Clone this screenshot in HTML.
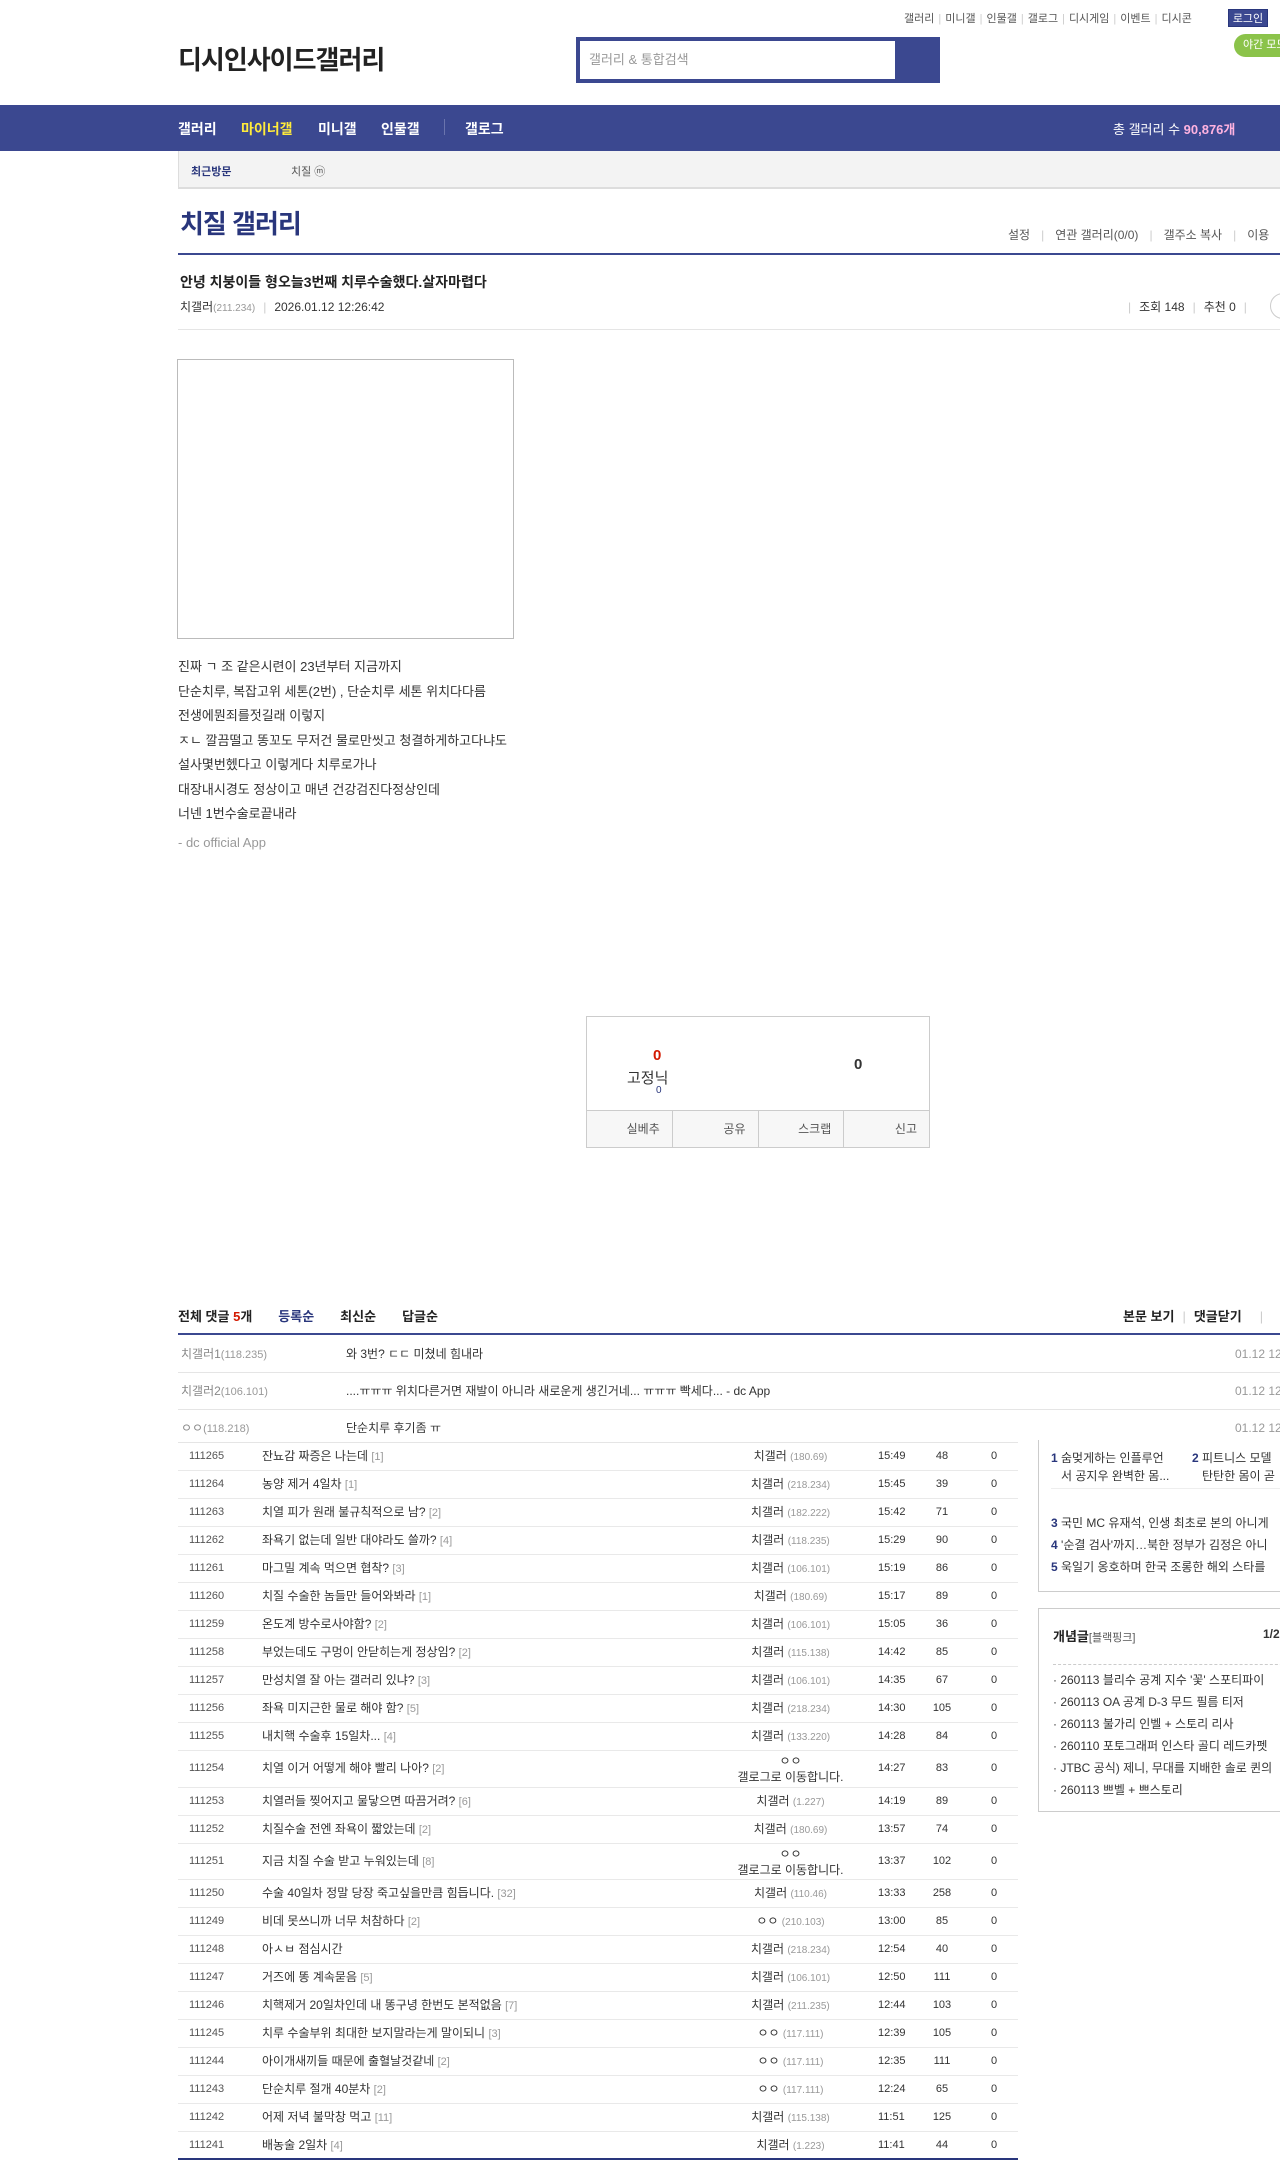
<!DOCTYPE html>
<html><head><meta charset="utf-8">
<style>
*{margin:0;padding:0;box-sizing:border-box}
html,body{width:1280px;height:2160px;overflow:hidden;background:#fff}
body{font-family:"Liberation Sans","Noto Sans CJK KR",sans-serif;color:#333;font-size:12px;position:relative}
.a{position:absolute;white-space:nowrap}
.toplinks{top:10px;left:904px;font-size:11px;color:#555}
.toplinks span.s{color:#ccc;margin:0 4px}
.login{top:9px;left:1228px;width:40px;height:18px;background:#3b4890;color:#fff;font-size:11px;text-align:center;line-height:18px;border:1px solid #29367c}
.night{top:34px;left:1234px;width:60px;height:23px;background:#8bc34a;border-radius:12px;color:#fff;font-size:11px;line-height:23px;padding-left:9px}
.logo{top:40px;left:178px;font-size:26px;font-weight:bold;color:#222;letter-spacing:-1px}
.search{top:37px;left:576px;width:364px;height:46px;background:#3b4890}
.search div{position:absolute;left:4px;top:4px;width:315px;height:38px;background:#fff;font-size:13px;color:#999;line-height:38px;padding-left:9px}
.nav{top:105px;left:0;width:1280px;height:46px;background:#3b4890}
.nav span{position:absolute;top:14px;color:#fff;font-size:14px;font-weight:bold}
.recent{top:151px;left:178px;width:1102px;height:38px;background:#f3f3f3;border-bottom:2px solid #ddd;border-left:1px solid #ddd}
.title{top:204px;left:180px;font-size:26px;font-weight:bold;color:#29367c;letter-spacing:-1px}
.rlinks{top:226px;left:1008px;font-size:12px;color:#555}
.rlinks i{font-style:normal;color:#ccc;margin:0 11px}
.bline{left:178px;width:1102px;background:#3b4890}
.gline{left:178px;width:1102px;height:1px;background:#e5e5e5}
.body p{font-size:13px;color:#333;height:24.5px;line-height:24.5px}
.rec{top:1016px;left:586px;width:344px;height:132px;border:1px solid #ccc}
.rec .btns{position:absolute;left:0;top:93px;width:342px;height:37px;border-top:1px solid #ccc;background:#f7f7f7;display:flex}
.rec .btns div{flex:1;border-right:1px solid #ccc;text-align:right;padding-right:12px;line-height:37px;font-size:12px;color:#555}
.rec .btns div:last-child{border-right:none}
.ch{top:1306px;left:178px;font-size:13px;font-weight:bold;color:#222}
.cm{left:178px;width:1102px;height:37px;border-bottom:1px solid #e5e5e5;font-size:12px}
.cm span{position:absolute;top:0;line-height:36px}
.cm .n{left:3px;color:#888}
.cm .n small{font-size:11px;color:#999}
.cm .t{left:168px;color:#333}
.cm .d{left:1057px;color:#999}
.list{top:1443px;left:178px;width:840px}
.row{position:relative;height:28px;border-bottom:1px solid #e9e9e9;font-size:12px;color:#333}
.row.tall{height:36px}
.row>span{position:absolute;top:0;line-height:27px}
.row.tall>span{line-height:35px}
.row .num{left:11px;font-size:11px;color:#555}
.row .tt{left:84px}
.row .tt b{font-weight:normal;color:#999;font-size:11px}
.row .w{left:540px;width:145px;text-align:center}
.row .w small{color:#999;font-size:10px}
.row .tm{left:700px;font-size:11px}
.row .v{left:748px;width:32px;text-align:center;font-size:11px}
.row .r{left:806px;width:20px;text-align:center;font-size:11px}
.row .w2{position:absolute;left:540px;width:145px;text-align:center;top:2px;line-height:16px;font-size:12px}
.box{border:1px solid #ccc;border-right:none;left:1038px;width:260px}
</style></head><body>

<div class="a toplinks">갤러리<span class="s">|</span>미니갤<span class="s">|</span>인물갤<span class="s">|</span>갤로그<span class="s">|</span>디시게임<span class="s">|</span>이벤트<span class="s">|</span>디시콘</div>
<div class="a login">로그인</div>
<div class="a night">야간 모드</div>
<div class="a logo">디시인사이드갤러리</div>
<div class="a search"><div>갤러리 &amp; 통합검색</div></div>

<div class="a nav">
<span style="left:178px">갤러리</span>
<span style="left:241px;color:#ffeb3b">마이너갤</span>
<span style="left:318px">미니갤</span>
<span style="left:381px">인물갤</span>
<span style="left:444px;top:14px;width:1px;height:16px;background:#6a74ad"></span>
<span style="left:465px">갤로그</span>
<span style="left:1113px;font-weight:normal;font-size:13px">총 갤러리 수 <b style="color:#ffb3e0">90,876개</b></span>
</div>

<div class="a recent">
<span class="a" style="left:12px;top:12px;font-size:11px;font-weight:bold;color:#29367c">최근방문</span>
<span class="a" style="left:112px;top:12px;font-size:11px;color:#555">치질 ⓜ</span>
</div>

<div class="a title">치질 갤러리</div>
<div class="a rlinks">설정<i>|</i>연관 갤러리(0/0)<i>|</i>갤주소 복사<i>|</i>이용</div>
<div class="a bline" style="top:253px;height:2px"></div>

<div class="a" style="top:272px;left:180px;font-size:14px;font-weight:bold;color:#222">안녕 치붕이들 형오늘3번째 치루수술했다.살자마렵다</div>
<div class="a" style="top:298px;left:180px;font-size:12px;color:#333">치갤러<small style="color:#999;font-size:10px">(211.234)</small><span style="color:#ccc;margin:0 8px">|</span>2026.01.12 12:26:42</div>
<div class="a" style="top:298px;left:1128px;font-size:12px;color:#333"><span style="color:#ccc;margin-right:8px">|</span>조회 148<span style="color:#ccc;margin:0 8px">|</span>추천 0<span style="color:#ccc;margin-left:8px">|</span></div>
<div class="a" style="top:293px;left:1270px;width:26px;height:26px;border:1px solid #ccc;border-radius:50%"></div>
<div class="a gline" style="top:329px"></div>

<div class="a" style="top:359px;left:177px;width:337px;height:280px;border:1px solid #bbb"></div>
<div class="a body" style="top:655px;left:178px">
<p>진짜 ㄱ 조 같은시련이 23년부터 지금까지</p>
<p>단순치루, 복잡고위 세톤(2번) , 단순치루 세톤 위치다다름</p>
<p>전생에뭔죄를젓길래 이렇지</p>
<p>ㅈㄴ 깔끔떨고 똥꼬도 무저건 물로만씻고 청결하게하고다냐도</p>
<p>설사몇번헸다고 이렇게다 치루로가나</p>
<p>대장내시경도 정상이고 매년 건강검진다정상인데</p>
<p>너넨 1번수술로끝내라</p>
<p style="color:#999;margin-top:4px">- dc official App</p>
</div>

<div class="a rec">
<span class="a" style="left:66px;top:30px;color:#d31900;font-weight:bold;font-size:15px">0</span>
<span class="a" style="left:40px;top:50px;font-size:15px;color:#333">고정닉</span>
<span class="a" style="left:69px;top:68px;font-size:10px;color:#29367c">0</span>
<span class="a" style="left:267px;top:39px;font-weight:bold;font-size:15px;color:#333">0</span>
<div class="btns"><div>실베추</div><div>공유</div><div>스크랩</div><div>신고</div></div>
</div>

<div class="a ch">전체 댓글 <span style="color:#d31900">5</span>개<span style="color:#29367c;margin-left:26px">등록순</span><span style="margin-left:26px">최신순</span><span style="margin-left:26px">답글순</span></div>
<div class="a" style="top:1306px;left:1123px;font-size:13px;font-weight:bold;color:#222">본문 보기<span style="color:#ccc;font-weight:normal;margin:0 8px">|</span>댓글닫기<span style="color:#ccc;font-weight:normal;margin-left:18px">|</span></div>
<div class="a bline" style="top:1333px;height:2px"></div>
<div class="a cm" style="top:1336px"><span class="n">치갤러1<small>(118.235)</small></span><span class="t">와 3번? ㄷㄷ 미쳤네 힘내라</span><span class="d">01.12 12:</span></div>
<div class="a cm" style="top:1373px"><span class="n">치갤러2<small>(106.101)</small></span><span class="t">....ㅠㅠㅠ 위치다른거면 재발이 아니라 새로운게 생긴거네... ㅠㅠㅠ 빡세다... - dc App</span><span class="d">01.12 12:</span></div>
<div class="a cm" style="top:1410px;height:33px;border-bottom:none"><span class="n">ㅇㅇ<small>(118.218)</small></span><span class="t">단순치루 후기좀 ㅠ</span><span class="d">01.12 12:</span></div>
<div class="a" style="top:1442px;left:178px;width:840px;height:1px;background:#e5e5e5"></div>

<div class="a list">
<div class="row"><span class="num">111265</span><span class="tt">잔뇨감 짜증은 나는데 <b>[1]</b></span><span class="w">치갤러 <small>(180.69)</small></span><span class="tm">15:49</span><span class="v">48</span><span class="r">0</span></div>
<div class="row"><span class="num">111264</span><span class="tt">농양 제거 4일차 <b>[1]</b></span><span class="w">치갤러 <small>(218.234)</small></span><span class="tm">15:45</span><span class="v">39</span><span class="r">0</span></div>
<div class="row"><span class="num">111263</span><span class="tt">치열 피가 원래 불규칙적으로 남? <b>[2]</b></span><span class="w">치갤러 <small>(182.222)</small></span><span class="tm">15:42</span><span class="v">71</span><span class="r">0</span></div>
<div class="row"><span class="num">111262</span><span class="tt">좌욕기 없는데 일반 대야라도 쓸까? <b>[4]</b></span><span class="w">치갤러 <small>(118.235)</small></span><span class="tm">15:29</span><span class="v">90</span><span class="r">0</span></div>
<div class="row"><span class="num">111261</span><span class="tt">마그밀 계속 먹으면 협착? <b>[3]</b></span><span class="w">치갤러 <small>(106.101)</small></span><span class="tm">15:19</span><span class="v">86</span><span class="r">0</span></div>
<div class="row"><span class="num">111260</span><span class="tt">치질 수술한 놈들만 들어와봐라 <b>[1]</b></span><span class="w">치갤러 <small>(180.69)</small></span><span class="tm">15:17</span><span class="v">89</span><span class="r">0</span></div>
<div class="row"><span class="num">111259</span><span class="tt">온도계 방수로사야함? <b>[2]</b></span><span class="w">치갤러 <small>(106.101)</small></span><span class="tm">15:05</span><span class="v">36</span><span class="r">0</span></div>
<div class="row"><span class="num">111258</span><span class="tt">부었는데도 구멍이 안닫히는게 정상임? <b>[2]</b></span><span class="w">치갤러 <small>(115.138)</small></span><span class="tm">14:42</span><span class="v">85</span><span class="r">0</span></div>
<div class="row"><span class="num">111257</span><span class="tt">만성치열 잘 아는 갤러리 있냐? <b>[3]</b></span><span class="w">치갤러 <small>(106.101)</small></span><span class="tm">14:35</span><span class="v">67</span><span class="r">0</span></div>
<div class="row"><span class="num">111256</span><span class="tt">좌욕 미지근한 물로 해야 함? <b>[5]</b></span><span class="w">치갤러 <small>(218.234)</small></span><span class="tm">14:30</span><span class="v">105</span><span class="r">0</span></div>
<div class="row"><span class="num">111255</span><span class="tt">내치핵 수술후 15일차... <b>[4]</b></span><span class="w">치갤러 <small>(133.220)</small></span><span class="tm">14:28</span><span class="v">84</span><span class="r">0</span></div>
<div class="row tall" style="height:37px"><span class="num">111254</span><span class="tt">치열 이거 어떻게 해야 빨리 나아? <b>[2]</b></span><div class="w2">ㅇㅇ<br>갤로그로 이동합니다.</div><span class="tm">14:27</span><span class="v">83</span><span class="r">0</span></div>
<div class="row"><span class="num">111253</span><span class="tt">치열러들 찢어지고 물닿으면 따끔거려? <b>[6]</b></span><span class="w">치갤러 <small>(1.227)</small></span><span class="tm">14:19</span><span class="v">89</span><span class="r">0</span></div>
<div class="row"><span class="num">111252</span><span class="tt">치질수술 전엔 좌욕이 짧았는데 <b>[2]</b></span><span class="w">치갤러 <small>(180.69)</small></span><span class="tm">13:57</span><span class="v">74</span><span class="r">0</span></div>
<div class="row tall"><span class="num">111251</span><span class="tt">지금 치질 수술 받고 누워있는데 <b>[8]</b></span><div class="w2">ㅇㅇ<br>갤로그로 이동합니다.</div><span class="tm">13:37</span><span class="v">102</span><span class="r">0</span></div>
<div class="row"><span class="num">111250</span><span class="tt">수술 40일차 정말 당장 죽고싶을만큼 힘듭니다. <b>[32]</b></span><span class="w">치갤러 <small>(110.46)</small></span><span class="tm">13:33</span><span class="v">258</span><span class="r">0</span></div>
<div class="row"><span class="num">111249</span><span class="tt">비데 못쓰니까 너무 처참하다 <b>[2]</b></span><span class="w">ㅇㅇ <small>(210.103)</small></span><span class="tm">13:00</span><span class="v">85</span><span class="r">0</span></div>
<div class="row"><span class="num">111248</span><span class="tt">아ㅅㅂ 점심시간</span><span class="w">치갤러 <small>(218.234)</small></span><span class="tm">12:54</span><span class="v">40</span><span class="r">0</span></div>
<div class="row"><span class="num">111247</span><span class="tt">거즈에 똥 계속묻음 <b>[5]</b></span><span class="w">치갤러 <small>(106.101)</small></span><span class="tm">12:50</span><span class="v">111</span><span class="r">0</span></div>
<div class="row"><span class="num">111246</span><span class="tt">치핵제거 20일차인데 내 똥구녕 한번도 본적없음 <b>[7]</b></span><span class="w">치갤러 <small>(211.235)</small></span><span class="tm">12:44</span><span class="v">103</span><span class="r">0</span></div>
<div class="row"><span class="num">111245</span><span class="tt">치루 수술부위 최대한 보지말라는게 말이되니 <b>[3]</b></span><span class="w">ㅇㅇ <small>(117.111)</small></span><span class="tm">12:39</span><span class="v">105</span><span class="r">0</span></div>
<div class="row"><span class="num">111244</span><span class="tt">아이개새끼들 때문에 출혈날것같네 <b>[2]</b></span><span class="w">ㅇㅇ <small>(117.111)</small></span><span class="tm">12:35</span><span class="v">111</span><span class="r">0</span></div>
<div class="row"><span class="num">111243</span><span class="tt">단순치루 절개 40분차 <b>[2]</b></span><span class="w">ㅇㅇ <small>(117.111)</small></span><span class="tm">12:24</span><span class="v">65</span><span class="r">0</span></div>
<div class="row"><span class="num">111242</span><span class="tt">어제 저녁 불막창 먹고 <b>[11]</b></span><span class="w">치갤러 <small>(115.138)</small></span><span class="tm">11:51</span><span class="v">125</span><span class="r">0</span></div>
<div class="row" style="border-bottom:2px solid #29367c"><span class="num">111241</span><span class="tt">배농술 2일차 <b>[4]</b></span><span class="w">치갤러 <small>(1.223)</small></span><span class="tm">11:41</span><span class="v">44</span><span class="r">0</span></div>
</div>

<div class="a box" style="top:1440px;height:152px;border-top:none">
<div class="a" style="left:12px;top:9px;font-size:12px;line-height:18px;white-space:normal;width:130px"><b style="color:#29367c">1</b> 숨멎게하는 인플루언<br>&nbsp;&nbsp;&nbsp;서 공지우 완벽한 몸...</div>
<div class="a" style="left:153px;top:9px;font-size:12px;line-height:18px"><b style="color:#29367c">2</b> 피트니스 모델<br>&nbsp;&nbsp;&nbsp;탄탄한 몸이 곧</div>
<div class="a" style="left:12px;top:48px;width:236px;height:1px;background:#eee"></div>
<div class="a" style="left:12px;top:74px;font-size:12px"><b style="color:#29367c">3</b> 국민 MC 유재석, 인생 최초로 본의 아니게</div>
<div class="a" style="left:12px;top:96px;font-size:12px"><b style="color:#29367c">4</b> '순결 검사'까지…북한 정부가 김정은 아니</div>
<div class="a" style="left:12px;top:118px;font-size:12px"><b style="color:#29367c">5</b> 욱일기 옹호하며 한국 조롱한 해외 스타를</div>
</div>
<div class="a box" style="top:1608px;height:204px">
<div class="a" style="left:14px;top:17px;font-size:13px;font-weight:bold;color:#222">개념글<span style="font-weight:normal;font-size:11px;color:#555">[블랙핑크]</span></div>
<div class="a" style="left:224px;top:18px;font-size:12px;font-weight:bold">1/2</div>
<div class="a" style="left:14px;top:55px;width:240px;border-top:1px dashed #ccc"></div>
<div class="a" style="left:14px;top:60px;font-size:12px;line-height:22px">· 260113 블리수 공계 지수 '꽃' 스포티파이<br>· 260113 OA 공계 D-3 무드 필름 티저<br>· 260113 불가리 인벨 + 스토리 리사<br>· 260110 포토그래퍼 인스타 골디 레드카펫<br>· JTBC 공식) 제니, 무대를 지배한 솔로 퀸의<br>· 260113 쁘벨 + 쁘스토리</div>
</div>
</body></html>
